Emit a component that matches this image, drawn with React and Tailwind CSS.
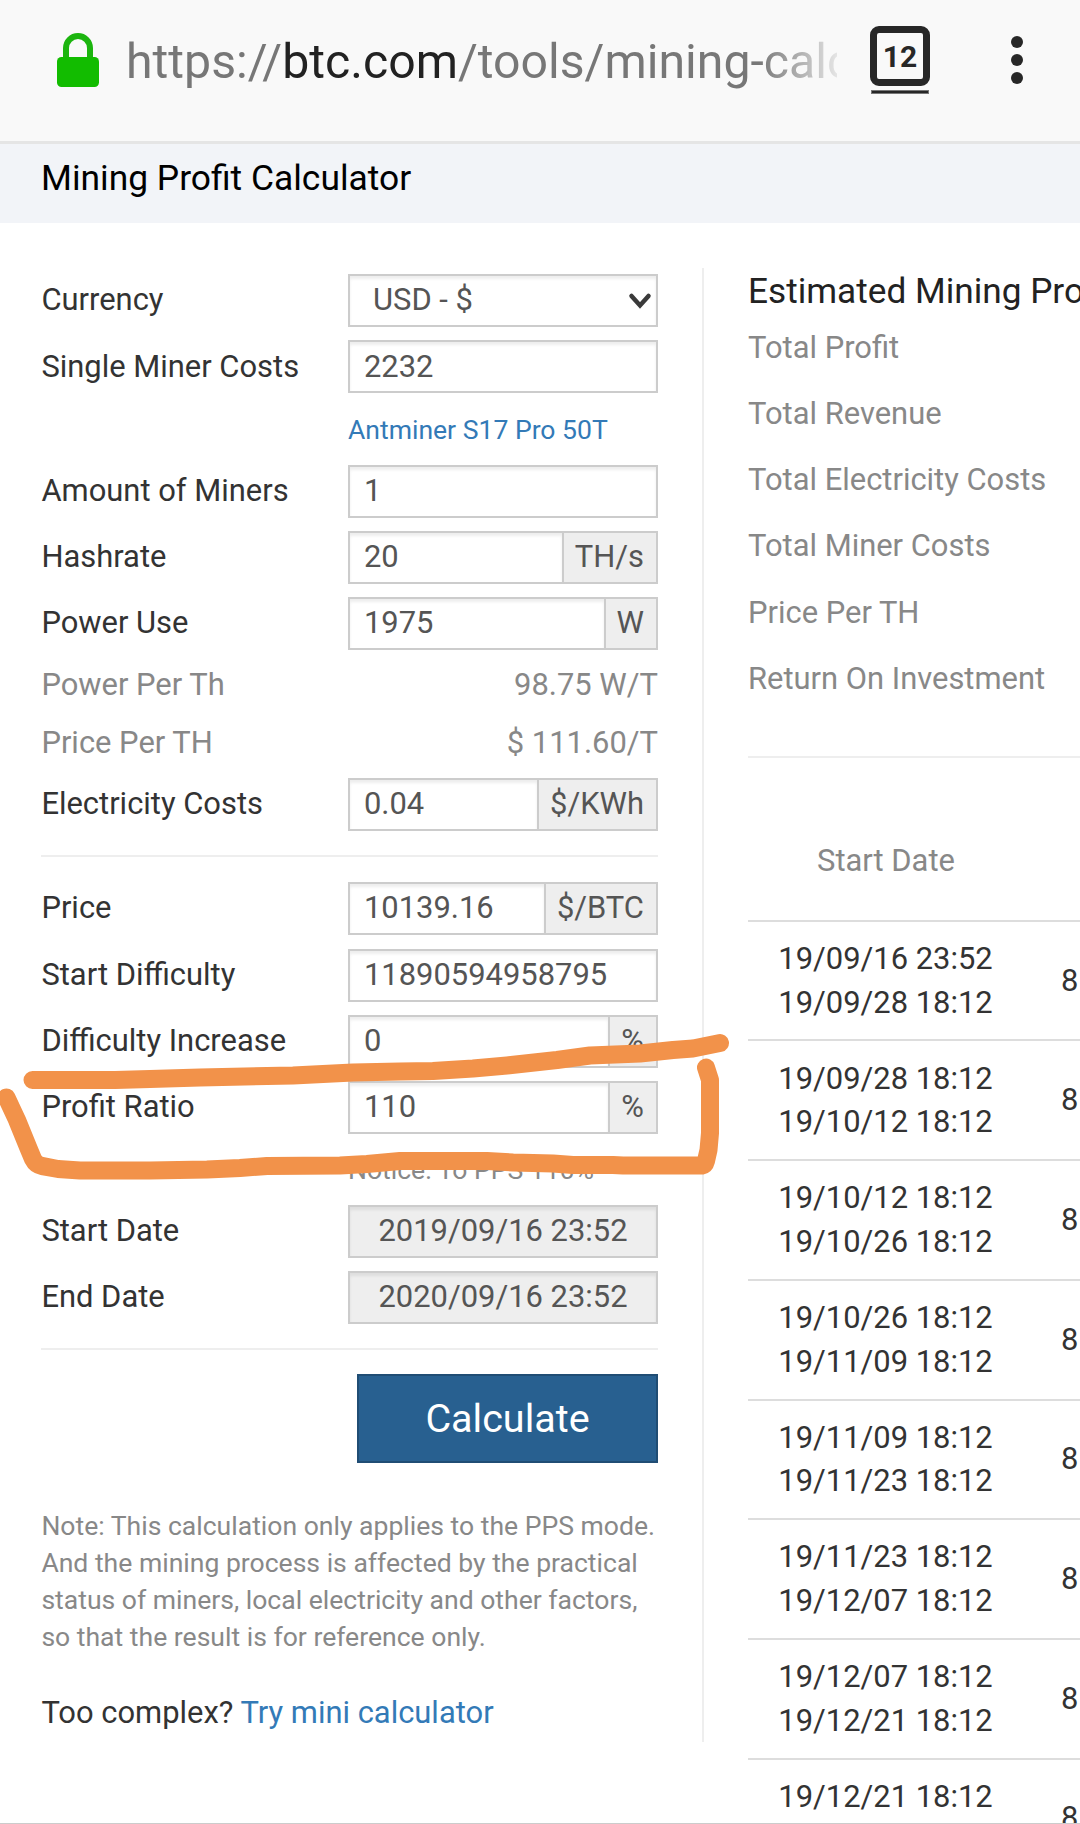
// App.jsx — mining profit calculator page inside a mobile browser

const TOTALS = [
  'Total Profit',
  'Total Revenue',
  'Total Electricity Costs',
  'Total Miner Costs',
  'Price Per TH',
  'Return On Investment',
]

const PERIODS = [
  ['19/09/16 23:52', '19/09/28 18:12'],
  ['19/09/28 18:12', '19/10/12 18:12'],
  ['19/10/12 18:12', '19/10/26 18:12'],
  ['19/10/26 18:12', '19/11/09 18:12'],
  ['19/11/09 18:12', '19/11/23 18:12'],
  ['19/11/23 18:12', '19/12/07 18:12'],
  ['19/12/07 18:12', '19/12/21 18:12'],
  ['19/12/21 18:12', ''],
]

function BrowserBar() {
  return (
    <header className="flex h-[144px] items-start border-b-3 border-[#e5e5e5] bg-[#f9f9f9]">
      <svg className="ml-[57px] mt-[32px] shrink-0" width="42" height="56" viewBox="0 0 42 56">
        <path d="M9 30V16a12 12 0 0 1 24 0v14" fill="none" stroke="#1cb50f" strokeWidth="6" />
        <rect x="0" y="25" width="42" height="30" rx="4.5" fill="#12bc00" />
      </svg>
      <div className="ml-[27px] mt-[26px] w-[711px] overflow-hidden whitespace-nowrap text-[48.2px] leading-[72px] text-[#777] [mask-image:linear-gradient(to_right,black_89%,transparent_102%)]">
        https://<span className="text-[#222]">btc.com</span>/tools/mining-calc
      </div>
      <div className="ml-[33px] mt-[26px] flex w-[60px] flex-col items-center gap-1">
        <div className="flex h-[60px] w-[60px] items-center justify-center rounded-[9px] border-7 border-[#272727] pt-px text-[30px] font-bold text-[#272727]">12</div>
        <div className="h-[4px] w-[58px] border border-[#777] bg-[#272727]" />
      </div>
      <div className="ml-[81px] mt-[36px] flex flex-col gap-[6px]">
        <span className="h-3 w-3 rounded-full bg-[#272727]" />
        <span className="h-3 w-3 rounded-full bg-[#272727]" />
        <span className="h-3 w-3 rounded-full bg-[#272727]" />
      </div>
    </header>
  )
}

function Row({ label, children }) {
  return (
    <div className="mb-[13.2px] flex h-[53px] items-center justify-between">
      <span className="text-[#333]">{label}</span>
      {children}
    </div>
  )
}

// Text box with an optional unit on the right
function Field({ value, unit }) {
  return (
    <div className="flex h-[53px] w-[310px] items-stretch border-2 border-[#ccc] text-[#555]">
      <div className="flex flex-1 items-center pl-[14px] shadow-[inset_0_3px_3px_rgba(0,0,0,0.07)]">{value}</div>
      {unit && <div className="flex items-center border-l-2 border-[#ccc] bg-[#eee] pl-[11px] pr-[12px]">{unit}</div>}
    </div>
  )
}

function DateField({ value }) {
  return (
    <div className="flex h-[53px] w-[310px] items-center justify-center border-2 border-[#ccc] bg-[#eee] text-[#555] shadow-[inset_0_3px_3px_rgba(0,0,0,0.07)]">
      {value}
    </div>
  )
}

function CalculatorForm() {
  return (
    <section className="ml-[41.4px] mt-[51.3px] w-[616.6px] shrink-0">
      <Row label="Currency">
        <div className="flex h-[53px] w-[310px] items-center justify-between border-2 border-[#ccc] pl-[23px] pr-[4px] text-[#555] shadow-[inset_0_3px_3px_rgba(0,0,0,0.07)]">
          USD - $
          <svg width="24" height="18" viewBox="0 0 24 18" fill="none" stroke="#3a3a3a" strokeWidth="4.5" strokeLinecap="round">
            <path d="M3.5 4 12 13.5 20.500 4" />
          </svg>
        </div>
      </Row>
      <Row label="Single Miner Costs"><Field value="2232" /></Row>
      <div className="-mt-[13.2px] flex h-[71.3px] items-center pl-[306.6px] pt-[2px] text-[26.55px] text-[#337ab7]">Antminer S17 Pro 50T</div>
      <Row label="Amount of Miners"><Field value="1" /></Row>
      <Row label="Hashrate"><Field value="20" unit="TH/s" /></Row>
      <Row label="Power Use"><Field value="1975" unit="W" /></Row>

      <div className="-mt-[7px] flex h-[58px] items-center justify-between text-[#888]">
        <span>Power Per Th</span><span>98.75 W/T</span>
      </div>
      <div className="mb-[6px] flex h-[58px] items-center justify-between text-[#888]">
        <span>Price Per TH</span><span>$ 111.60/T</span>
      </div>

      <Row label="Electricity Costs"><Field value="0.04" unit="$/KWh" /></Row>
      <div className="mb-[25px] mt-[24px] h-[2px] bg-[#eee]" />
      <Row label="Price"><Field value="10139.16" unit="$/BTC" /></Row>
      <Row label="Start Difficulty"><Field value="11890594958795" /></Row>
      <Row label="Difficulty Increase"><Field value="0" unit="%" /></Row>
      <Row label="Profit Ratio"><Field value="110" unit="%" /></Row>
      <div className="-mt-[13.2px] flex h-[70.8px] items-center pl-[306.6px] pt-[2px] text-[26.55px] text-[#888]">Notice: To PPS 110%</div>
      <Row label="Start Date"><DateField value="2019/09/16 23:52" /></Row>
      <Row label="End Date"><DateField value="2020/09/16 23:52" /></Row>
      <div className="mb-[24px] mt-[24px] h-[2px] bg-[#eee]" />

      <button className="ml-auto flex h-[89px] w-[301px] items-center justify-center border-2 border-[#204d74] bg-[#286090] text-[39.500px] text-white">
        Calculate
      </button>
      <p className="mt-[43.7px] whitespace-nowrap text-[26.55px] leading-[37px] text-[#888]">
        Note: This calculation only applies to the PPS mode.<br />
        And the mining process is affected by the practical<br />
        status of miners, local electricity and other factors,<br />
        so that the result is for reference only.
      </p>
      <p className="mt-[36px] leading-[44px] text-[#333]">
        Too complex? <span className="text-[#337ab7]">Try mini calculator</span>
      </p>
    </section>
  )
}

function Results() {
  return (
    <section className="ml-[44px] w-[700px] shrink-0 whitespace-nowrap pt-[45px]">
      <h2 className="text-[35.2px] leading-[46px] text-[#222]">Estimated Mining Profits</h2>
      <ul className="pt-[0.6px] text-[#888]">
        {TOTALS.map(t => <li key={t} className="h-[66.3px] leading-[66.3px]">{t}</li>)}
      </ul>
      <div className="mt-[43.4px] h-[2px] bg-[#eee]" />
      <div className="flex h-[162px] w-[276px] items-end justify-center pb-[43px] text-[#888]">Start Date</div>
      {PERIODS.map(([from, to]) => (
        <div key={from} className="flex h-[119.7px] items-center border-t-2 border-[#ddd] text-[#333]">
          <div className="w-[275px] text-center leading-[43.7px]">{from}<br />{to || '\u00a0'}</div>
          <span className="pl-[38px] pt-px">8</span>
        </div>
      ))}
    </section>
  )
}

// Freehand marker strokes around the Profit Ratio row
function Marker() {
  return (
    <svg className="pointer-events-none absolute left-0 top-0" width="1080" height="1824" viewBox="0 0 1080 1824" fill="none" stroke="#f2924a" strokeWidth="18" strokeLinecap="round" strokeLinejoin="round">
      <path d="M32.500 1080H115L150 1079 200 1077.500 293 1075.500 353 1072.500 400 1071.500 433 1071 473 1068.500 507 1065.500 557 1060 590 1055.500 640 1053.500 673 1050 693 1048.500 720 1043" />
      <path d="M6.500 1097.500 17 1120 28 1147 33 1159Q36 1165 42 1166L58 1169 80 1170.500 150 1170.500 207 1169.500 240 1168 267 1166 340 1165.500 367 1164 400 1161H487L513 1162.500 553 1163.500 573 1165 613 1165 623 1165.500H702Q705 1165 706 1161L708.500 1150 710 1133V1080L706 1067.500" />
    </svg>
  )
}

export default function App() {
  return (
    <div className="relative h-[1824px] w-[1080px] overflow-hidden border-b border-[#ccc] bg-white font-['Roboto',sans-serif] text-[30.92px] leading-none">
      <BrowserBar />
      <h1 className="flex h-[79px] items-center bg-[#f2f4f8] pb-[9px] pl-[41px] text-[35.4px] text-black">Mining Profit Calculator</h1>
      <main className="flex items-start">
        <CalculatorForm />
        <div className="ml-[44px] mt-[45px] h-[1474px] w-[2px] shrink-0 bg-[#eee]" />
        <Results />
      </main>
      <Marker />
    </div>
  )
}
